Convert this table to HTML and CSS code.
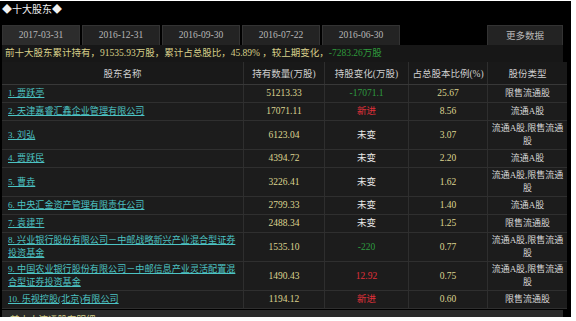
FILE: index.html
```html
<!DOCTYPE html>
<html lang="zh-CN">
<head>
<meta charset="utf-8">
<title>十大股东</title>
<link rel="stylesheet" href="styles.css">
</head>
<body>
<div class="screen">
  <div class="title">◆十大股东◆</div>
  <div class="tabs">
    <div class="tab active">2017-03-31</div>
    <div class="tab">2016-12-31</div>
    <div class="tab">2016-09-30</div>
    <div class="tab">2016-07-22</div>
    <div class="tab">2016-06-30</div>
    <div class="tab more-tab">更多数据</div>
  </div>
  <div class="summary">前十大股东累计持有，91535.93万股，累计占总股比，45.89% ，较上期变化，<span class="down">-7283.26万股</span></div>
  <table class="holders">
    <thead>
      <tr>
        <th class="c-name">股东名称</th>
        <th class="c-hold">持有数量(万股)</th>
        <th class="c-chg">持股变化(万股)</th>
        <th class="c-pct">占总股本比例(%)</th>
        <th class="c-type">股份类型</th>
      </tr>
    </thead>
    <tbody>
      <tr><td class="name"><a href="#">1. 贾跃亭</a></td><td class="num">51213.33</td><td class="down">-17071.1</td><td class="num">25.67</td><td class="type">限售流通股</td></tr>
      <tr><td class="name"><a href="#">2. 天津嘉睿汇鑫企业管理有限公司</a></td><td class="num">17071.11</td><td class="up">新进</td><td class="num">8.56</td><td class="type">流通A股</td></tr>
      <tr class="tall"><td class="name"><a href="#">3. 刘弘</a></td><td class="num">6123.04</td><td class="same">未变</td><td class="num">3.07</td><td class="type">流通A股,限售流通<br>股</td></tr>
      <tr><td class="name"><a href="#">4. 贾跃民</a></td><td class="num">4394.72</td><td class="same">未变</td><td class="num">2.20</td><td class="type">流通A股</td></tr>
      <tr class="tall"><td class="name"><a href="#">5. 曹垚</a></td><td class="num">3226.41</td><td class="same">未变</td><td class="num">1.62</td><td class="type">流通A股,限售流通<br>股</td></tr>
      <tr><td class="name"><a href="#">6. 中央汇金资产管理有限责任公司</a></td><td class="num">2799.33</td><td class="same">未变</td><td class="num">1.40</td><td class="type">流通A股</td></tr>
      <tr><td class="name"><a href="#">7. 袁建平</a></td><td class="num">2488.34</td><td class="same">未变</td><td class="num">1.25</td><td class="type">限售流通股</td></tr>
      <tr class="tall"><td class="name"><a href="#">8. 兴业银行股份有限公司－中邮战略新兴产业混合型证券<br>投资基金</a></td><td class="num">1535.10</td><td class="down">-220</td><td class="num">0.77</td><td class="type">流通A股,限售流通<br>股</td></tr>
      <tr class="tall"><td class="name"><a href="#">9. 中国农业银行股份有限公司－中邮信息产业灵活配置混<br>合型证券投资基金</a></td><td class="num">1490.43</td><td class="up">12.92</td><td class="num">0.75</td><td class="type">流通A股,限售流通<br>股</td></tr>
      <tr><td class="name"><a href="#">10. 乐视控股(北京)有限公司</a></td><td class="num">1194.12</td><td class="up">新进</td><td class="num">0.60</td><td class="type">限售流通股</td></tr>
    </tbody>
  </table>
  <div class="footer-band">前十大流通股东明细</div>
</div>
</body>
</html>
```
FILE: styles.css
```css
html, body {
  margin: 0;
  padding: 0;
  background: #ffffff;
}

.screen {
  margin-top: 1px;
  width: 571px;
  height: 316px;
  background: #000;
  overflow: hidden;
  padding-left: 2px;
  box-sizing: border-box;
  font-family: "Liberation Serif", "Noto Sans CJK SC", serif;
  font-size: 9.5px;
}

.title {
  height: 24px;
  line-height: 15px;
  color: #f2f2f2;
  font-size: 10px;
  font-family: "Noto Sans CJK SC", sans-serif;
}

.tabs {
  display: flex;
  gap: 2px;
  width: 561px;
  height: 20px;
}

.tab {
  width: 78px;
  box-sizing: border-box;
  background: #232323;
  border: 1px solid #333;
  border-bottom: none;
  color: #b8b8b8;
  text-align: center;
  line-height: 19px;
  font-size: 9.5px;
}

.tab.active {
  background: #2c2c2c;
}

.tab.more-tab {
  margin-left: auto;
  width: 76px;
  font-family: "Noto Sans CJK SC", sans-serif;
}

.summary {
  width: 561px;
  height: 17px;
  box-sizing: border-box;
  background: #171717;
  color: #d8d08a;
  line-height: 17px;
  padding-left: 3px;
  white-space: nowrap;
}

.summary .down {
  color: #2f9a3c;
}

.holders {
  width: 561px;
  border-collapse: collapse;
  background: #1c1c1c;
  table-layout: fixed;
}

.holders th {
  height: 22px;
  color: #cfcfcf;
  font-weight: normal;
  background: #191919;
  border-bottom: 1px solid #383838;
  border-left: 1px solid #2e2e2e;
  padding: 0;
}

.holders th:first-child,
.holders td:first-child {
  border-left: none;
}

.c-name { width: 241px; }
.c-hold { width: 80px; }
.c-chg { width: 83px; }
.c-pct { width: 78px; }
.c-type { width: 79px; }

.holders tr {
  height: 18px;
}

.holders td {
  padding: 1px 2px;
  line-height: 13px;
  text-align: center;
  border-bottom: 1px solid #2f2f2f;
  border-left: 1px solid #2e2e2e;
  white-space: nowrap;
  overflow: hidden;
}

.holders td.name {
  text-align: left;
  padding-left: 6px;
  font-size: 9.1px;
}

.holders td.name a {
  color: #4cc3c3;
  text-decoration: underline;
}

.holders td.num {
  color: #ddd590;
}

.holders td.same {
  color: #e8e8e8;
}

.holders td.up {
  color: #e0303a;
}

.holders td.down {
  color: #2e9a40;
}

.holders td.type {
  color: #d8d8d8;
  font-size: 9px;
}

.footer-band {
  width: 561px;
  height: 16px;
  margin-top: 1px;
  background: #2b2b2b;
  color: #d8d08a;
  padding-left: 8px;
  box-sizing: border-box;
  line-height: 15px;
  padding-top: 3px;
}
```
